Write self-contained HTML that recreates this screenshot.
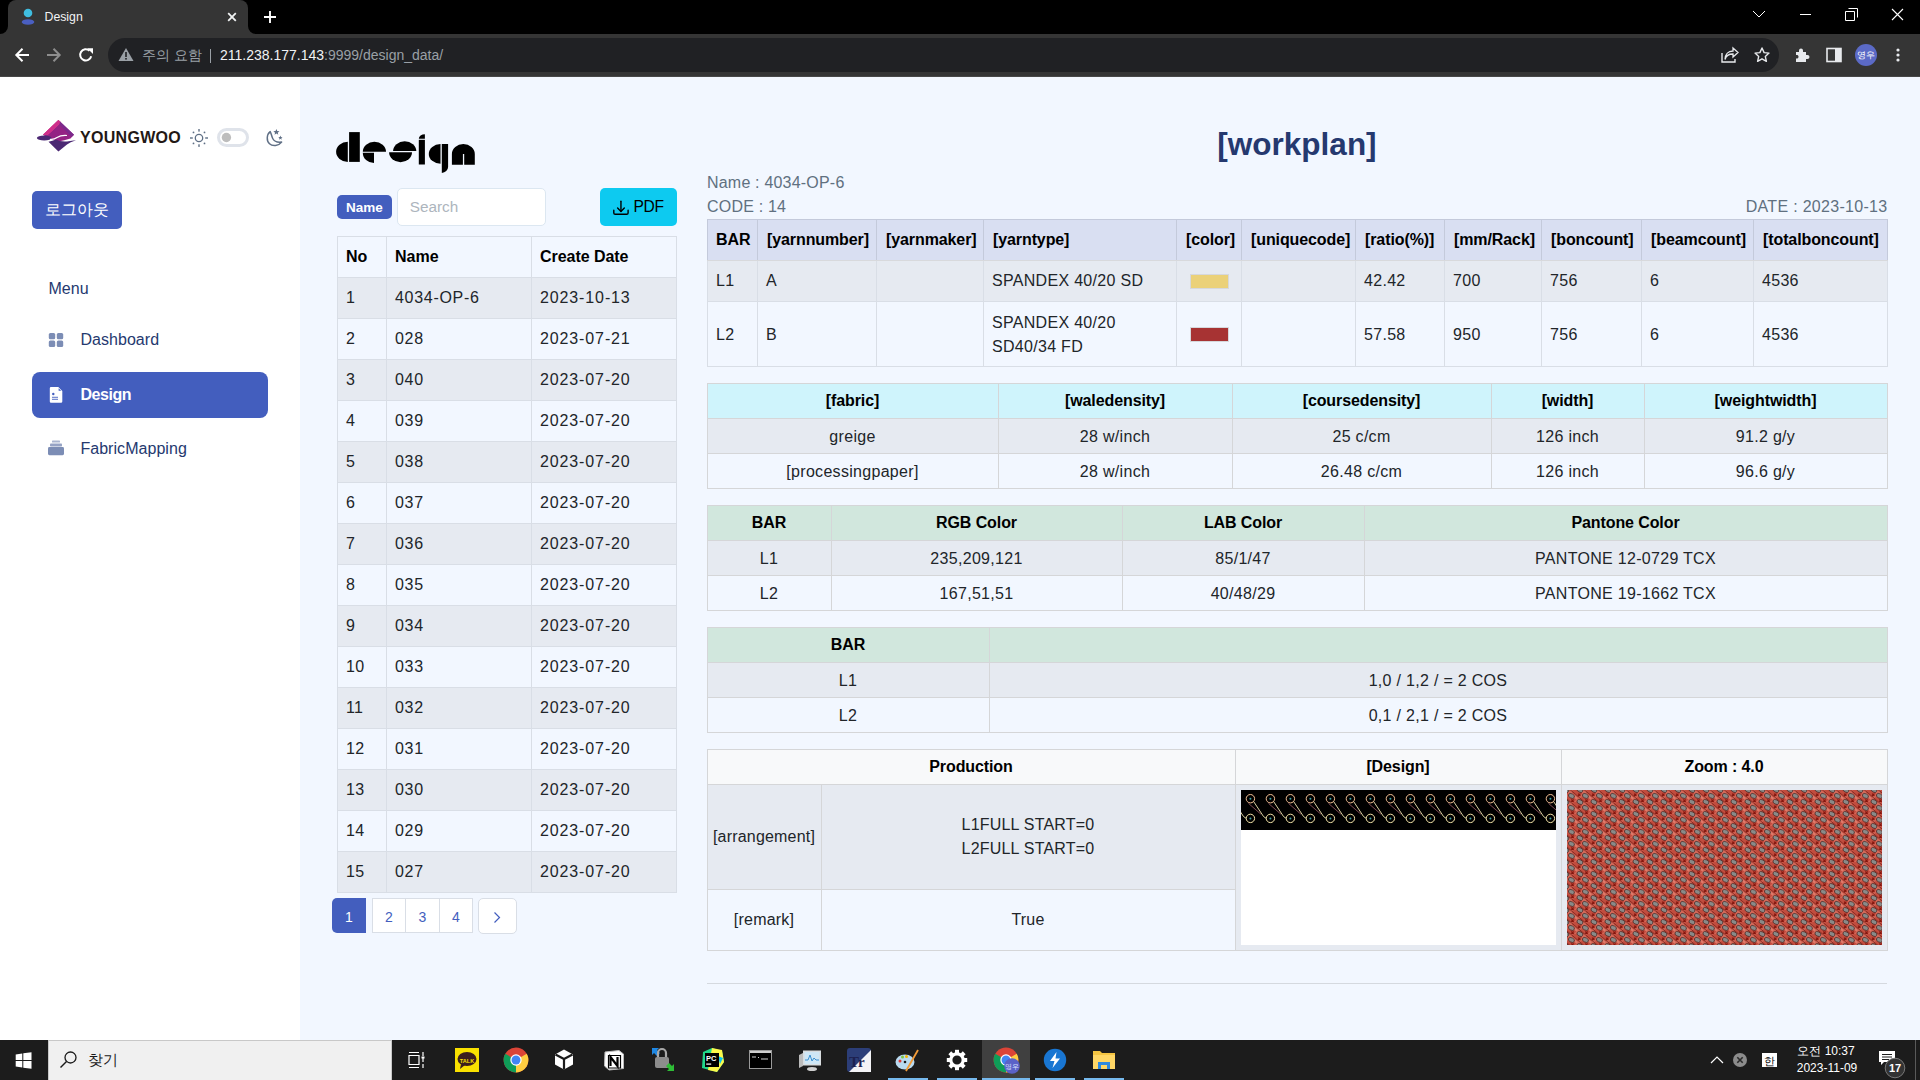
<!DOCTYPE html>
<html><head><meta charset="utf-8">
<style>
*{box-sizing:border-box;margin:0;padding:0}
html,body{width:1920px;height:1080px;overflow:hidden;position:relative;background:#f2f7ff;font-family:"Liberation Sans",sans-serif}
.a{position:absolute}
.t{white-space:nowrap}
svg.a{overflow:visible}
</style></head><body>
<div class="a" style="left:0px;top:0px;width:1920px;height:77px;background:#353535;"></div>
<div class="a" style="left:0px;top:0px;width:1920px;height:34px;background:#000;"></div>
<div class="a" style="left:8px;top:0px;width:240px;height:34px;background:#353535;border-radius:8px 8px 0 0"></div>
<div class="a" style="left:0px;top:26px;width:8px;height:8px;background:#353535;"></div>
<div class="a" style="left:0px;top:0px;width:8px;height:34px;background:#000;border-bottom-right-radius:8px"></div>
<div class="a" style="left:248px;top:26px;width:8px;height:8px;background:#353535;"></div>
<div class="a" style="left:248px;top:0px;width:1672px;height:34px;background:#000;border-bottom-left-radius:8px"></div>
<div class="a" style="left:0px;top:76px;width:1920px;height:1px;background:#474747;"></div>
<svg class="a" style="left:20px;top:7px" width="16" height="18" viewBox="0 0 16 18"><circle cx="8" cy="6" r="4.3" fill="#3fbde0"/><ellipse cx="8" cy="15" rx="6.3" ry="2.8" fill="#4a5fc1"/></svg>
<div class="a t" style="left:44.5px;top:9.24px;font-size:12.3px;line-height:17px;color:#f1f3f4;font-weight:400;">Design</div>
<svg class="a" style="left:226px;top:11px" width="12" height="12" viewBox="0 0 12 12"><path d="M2.2 2.2L9.8 9.8M9.8 2.2L2.2 9.8" stroke="#f1f3f4" stroke-width="1.8"/></svg>
<svg class="a" style="left:262px;top:9px" width="16" height="16" viewBox="0 0 16 16"><path d="M8 2V14M2 8H14" stroke="#fff" stroke-width="1.9"/></svg>
<svg class="a" style="left:1752px;top:9px" width="14" height="10" viewBox="0 0 14 10"><path d="M1 2L7 8L13 2" stroke="#fff" stroke-width="1" fill="none"/></svg>
<div class="a" style="left:1800px;top:14px;width:11px;height:1px;background:#fff;"></div>
<svg class="a" style="left:1845px;top:8px" width="13" height="13" viewBox="0 0 13 13"><path d="M3.5 0.5H12.5V9.5M0.5 3.5H9.5V12.5H0.5Z" stroke="#fff" stroke-width="1" fill="none"/></svg>
<svg class="a" style="left:1891px;top:8px" width="13" height="13" viewBox="0 0 13 13"><path d="M1 1L12 12M12 1L1 12" stroke="#fff" stroke-width="1.1"/></svg>
<svg class="a" style="left:14px;top:47px" width="16" height="16" viewBox="0 0 16 16"><path d="M15 8H2.5M8.5 1.8L2.3 8L8.5 14.2" stroke="#fff" stroke-width="2" fill="none"/></svg>
<svg class="a" style="left:46px;top:47px" width="16" height="16" viewBox="0 0 16 16"><path d="M1 8H13.5M7.5 1.8L13.7 8L7.5 14.2" stroke="#8e8e8e" stroke-width="2" fill="none"/></svg>
<svg class="a" style="left:78px;top:47px" width="16" height="16" viewBox="0 0 16 16"><path d="M13.2 9.2A5.6 5.6 0 1 1 11.5 3.7" stroke="#fff" stroke-width="2" fill="none"/><path d="M9.2 1.3H15V7.1Z" fill="#fff"/></svg>
<div class="a" style="left:108px;top:38px;width:1671px;height:34px;background:#202124;border-radius:17px"></div>
<svg class="a" style="left:118px;top:47px" width="16" height="15" viewBox="0 0 16 15"><path d="M8 1L15.5 14H0.5Z" fill="#9aa0a6"/><rect x="7.2" y="5" width="1.6" height="5" fill="#202124"/><rect x="7.2" y="11" width="1.6" height="1.6" fill="#202124"/></svg>
<div class="a t" style="left:142px;top:45.15px;font-size:14px;line-height:20px;color:#9aa0a6;font-weight:400;">주의 요함</div>
<div class="a" style="left:210px;top:49px;width:1px;height:14px;background:#9aa0a6;"></div>
<div class="a t" style="left:220px;top:45.15px;font-size:14px;line-height:20px;color:#f1f3f4;font-weight:400;">211.238.177.143<span style="color:#9aa0a6">:9999/design_data/</span></div>
<svg class="a" style="left:1721px;top:47px" width="18" height="16" viewBox="0 0 18 16"><path d="M1 6V15H14V12" stroke="#e8eaed" stroke-width="1.4" fill="none"/><path d="M4 11C5 7 8 5.5 12 5.5V8.5L17 4L12 -0.5V2.5C7 2.5 4 6 4 11Z" stroke="#e8eaed" stroke-width="1.3" fill="none" transform="translate(0,1.5)"/></svg>
<svg class="a" style="left:1754px;top:47px" width="16" height="16" viewBox="0 0 16 16"><path d="M8 1L10.1 5.6L15 6.1L11.3 9.4L12.4 14.3L8 11.8L3.6 14.3L4.7 9.4L1 6.1L5.9 5.6Z" stroke="#e8eaed" stroke-width="1.4" fill="none" stroke-linejoin="round"/></svg>
<svg class="a" style="left:1794px;top:47px" width="16" height="16" viewBox="0 0 16 16"><path d="M2 5H5V3.5A2 2 0 0 1 9 3.5V5H12V8H13.5A2 2 0 0 1 13.5 12H12V15H2V11.5H3.5A2 2 0 0 0 3.5 8H2Z" fill="#e8eaed"/></svg>
<svg class="a" style="left:1826px;top:47px" width="16" height="16" viewBox="0 0 16 16"><rect x="1" y="1.5" width="14" height="13" stroke="#e8eaed" stroke-width="1.6" fill="none"/><rect x="9" y="1.5" width="6" height="13" fill="#e8eaed"/></svg>
<svg class="a" style="left:1855px;top:44px" width="22" height="22" viewBox="0 0 22 22"><circle cx="11" cy="11" r="11" fill="#5b6ac6"/></svg>
<div class="a t" style="left:1366px;width:1000px;text-align:center;top:49.38px;font-size:9px;line-height:13px;color:#fff;font-weight:400;">영우</div>
<svg class="a" style="left:1896px;top:47px" width="4" height="16" viewBox="0 0 4 16"><circle cx="2" cy="3" r="1.6" fill="#e8eaed"/><circle cx="2" cy="8" r="1.6" fill="#e8eaed"/><circle cx="2" cy="13" r="1.6" fill="#e8eaed"/></svg>
<div class="a" style="left:0px;top:77px;width:300px;height:963px;background:#fff;"></div>
<svg class="a" style="left:30px;top:112px" width="60" height="48" viewBox="0 0 60 48">
<path d="M28.4 8L44 22.7L40.5 26.5Q34 28.5 28.5 29.5Q23 28 18 26L13 22.7Z" fill="#942284"/>
<path d="M28.4 8L13 22.7L18 22.7L31 10.5Z" fill="#e2408f"/>
<path d="M28.4 8L31 10.5L21 20L17 22.7L13 22.7Z" fill="#cf2e8a"/>
<path d="M30 9.5L44 22.7L41.5 25L29.5 12.5Z" fill="#7b2a8c"/>
<ellipse cx="14.2" cy="26" rx="7.3" ry="2.4" fill="#4b2873"/>
<path d="M18.5 29.8Q24 28.5 26 27.5Q30 30 37 29.5Q42 28.5 46 28.3Q40 30 37 32.5L28.4 39.6Z" fill="#4b2873"/>
<path d="M20 27.3Q24 27.8 27 25.5Q31 23 37 23.5" stroke="#fff" stroke-width="1.2" fill="none"/>
</svg>
<div class="a t" style="left:80px;top:127.26px;font-size:16px;line-height:22px;color:#231815;font-weight:700;letter-spacing:0.3px;">YOUNGWOO</div>
<svg class="a" style="left:188px;top:127px" width="22" height="22" viewBox="0 0 22 22">
<circle cx="11" cy="11" r="3.7" stroke="#5f6f85" stroke-width="1.3" fill="none"/>
<rect x="10.3" y="2" width="1.4" height="2.6" fill="#5f6f85"/><rect x="10.3" y="17.3" width="1.4" height="2.6" fill="#5f6f85"/>
<rect x="2" y="10.3" width="2.8" height="1.4" fill="#5f6f85"/><rect x="17.2" y="10.3" width="2.8" height="1.4" fill="#5f6f85"/>
<circle cx="5.5" cy="5.4" r="0.9" fill="#5f6f85"/><circle cx="16.5" cy="5.4" r="0.9" fill="#5f6f85"/>
<circle cx="5.5" cy="16.4" r="0.9" fill="#5f6f85"/><circle cx="16.5" cy="16.4" r="0.9" fill="#5f6f85"/>
</svg>
<div class="a" style="left:217px;top:128px;width:32px;height:19px;background:#fff;border:3px solid #dfe3ea;border-radius:10px"></div>
<svg class="a" style="left:221px;top:132px" width="11" height="11" viewBox="0 0 11 11"><circle cx="5.4" cy="5.5" r="4.7" fill="#bdbdbd"/></svg>
<svg class="a" style="left:264px;top:128px" width="22" height="20" viewBox="0 0 22 20">
<path d="M6.2 3.6C2.5 6.5 2.3 13 5.5 15.8C8.5 18.6 14.5 18.2 17.6 14.1C13.5 14.6 10.2 13.5 8.7 10.5C7.6 8.3 7.3 5.6 6.2 3.6Z" stroke="#5f6f85" stroke-width="1.5" fill="none" stroke-linejoin="round"/>
<path d="M12.40 1.00L13.22 3.07L15.44 3.21L13.73 4.63L14.28 6.79L12.40 5.60L10.52 6.79L11.07 4.63L9.36 3.21L11.58 3.07Z" fill="#5f6f85"/>
<path d="M16.40 7.50L16.99 8.99L18.59 9.09L17.35 10.11L17.75 11.66L16.40 10.80L15.05 11.66L15.45 10.11L14.21 9.09L15.81 8.99Z" fill="#5f6f85"/>
</svg>
<div class="a" style="left:32px;top:191px;width:90px;height:38px;background:#435ebe;border-radius:5px"></div>
<div class="a t" style="left:-423px;width:1000px;text-align:center;top:199.46px;font-size:16px;line-height:22px;color:#fff;font-weight:400;">로그아웃</div>
<div class="a t" style="left:48.4px;top:278.36px;font-size:16px;line-height:22px;color:#25396f;font-weight:400;letter-spacing:0.1px;">Menu</div>
<svg class="a" style="left:48px;top:332px" width="16" height="16" viewBox="0 0 16 16">
<rect x="0.8" y="0.9" width="6.4" height="6.4" rx="1.5" fill="#7c8db5"/><rect x="8.8" y="0.9" width="6.4" height="6.4" rx="1.5" fill="#7c8db5"/>
<rect x="0.8" y="8.6" width="6.4" height="6.4" rx="1.5" fill="#7c8db5"/><rect x="8.8" y="8.6" width="6.4" height="6.4" rx="1.5" fill="#7c8db5"/>
</svg>
<div class="a t" style="left:80.4px;top:329.06px;font-size:16px;line-height:22px;color:#25396f;font-weight:400;letter-spacing:0.05px;">Dashboard</div>
<div class="a" style="left:32px;top:372px;width:236px;height:46px;background:#435ebe;border-radius:8px"></div>
<svg class="a" style="left:49px;top:386px" width="15" height="18" viewBox="0 0 15 18">
<path d="M2 1H9.3L13.3 5V15.5A1.3 1.3 0 0 1 12 16.8H2A1.3 1.3 0 0 1 0.8 15.5V2.3A1.3 1.3 0 0 1 2 1Z" fill="#fff"/>
<path d="M9.6 2.2L12.2 4.8H9.6Z" fill="#435ebe"/>
<circle cx="4.3" cy="8" r="1.2" fill="#435ebe"/>
<rect x="3" y="10.8" width="6" height="0.9" fill="#435ebe"/><rect x="3" y="12.8" width="6" height="0.9" fill="#435ebe"/>
</svg>
<div class="a t" style="left:80.4px;top:383.96px;font-size:16px;line-height:22px;color:#fff;font-weight:700;letter-spacing:-0.45px;">Design</div>
<svg class="a" style="left:47px;top:440px" width="18" height="16" viewBox="0 0 18 16">
<rect x="5" y="0.6" width="8" height="2" rx="0.6" fill="#aab5d0"/>
<rect x="3" y="3.6" width="12" height="3" rx="0.8" fill="#96a3c5"/>
<rect x="1" y="7" width="16" height="8.2" rx="1.4" fill="#7c8db5"/>
</svg>
<div class="a t" style="left:80.4px;top:437.96px;font-size:16px;line-height:22px;color:#25396f;font-weight:400;letter-spacing:0.05px;">FabricMapping</div>
<div class="a" style="left:300px;top:77px;width:1620px;height:963px;background:#f2f7ff;"></div>
<svg class="a" style="left:330px;top:125px" width="150" height="55" viewBox="0 0 150 55">
<path d="M17.8 16.8A11.7 10.05 0 0 0 17.8 36.9Z" fill="#000"/>
<rect x="19.1" y="7.1" width="10.7" height="29.8" fill="#000"/>
<path d="M32.8 26.7A11.6 9.9 0 0 1 56 26.7Z" fill="#000"/>
<path d="M44 27.7H32.8A11.2 10.2 0 0 0 44 37.9Z" fill="#000"/>
<path d="M63.1 26A11.6 9.7 0 0 1 86.3 26Z" fill="#000"/>
<path d="M59.1 27.2H82A11.45 10 0 0 1 59.1 27.2Z" fill="#000"/>
<path d="M94.9 13.7H88.8A6.1 4.5 0 0 1 94.9 9.2Z" fill="#000"/>
<rect x="88.8" y="14.8" width="6.1" height="24.7" fill="#000"/>
<path d="M110.5 19.1A11.7 9.8 0 0 0 110.5 38.7Z" fill="#000"/>
<path d="M111.8 19.1H118.1V41.8A6.3 6.1 0 0 1 111.8 47.9Z" fill="#000"/>
<path d="M121.9 29A11.45 9.9 0 0 1 144.8 29V39.7H134.2V29H132.9V39.7H121.9Z" fill="#000"/>
</svg>
<div class="a" style="left:337px;top:195px;width:55px;height:24px;background:#435ebe;border-radius:5px"></div>
<div class="a t" style="left:-135.5px;width:1000px;text-align:center;top:197.82px;font-size:13.5px;line-height:19px;color:#fff;font-weight:700;">Name</div>
<div class="a" style="left:397px;top:188px;width:149px;height:38px;background:#fff;border:1px solid #dce7f1;border-radius:5px"></div>
<div class="a t" style="left:409.7px;top:195.80px;font-size:15.3px;line-height:21px;color:#adb5bd;font-weight:400;">Search</div>
<div class="a" style="left:600px;top:188px;width:77px;height:38px;background:#0dcaf0;border-radius:5px"></div>
<svg class="a" style="left:610px;top:199px" width="22" height="18" viewBox="0 0 22 18"><path d="M3.8 11.2V13.9Q3.8 15.3 5.2 15.3H16.7Q18.1 15.3 18.1 13.9V11.2" stroke="#000" stroke-width="1.4" fill="none" stroke-linecap="round"/><path d="M10.95 2.2V12.2" stroke="#000" stroke-width="1.4" stroke-linecap="round"/><path d="M7.6 9.1L10.95 12.5L14.3 9.1" stroke="#000" stroke-width="1.4" fill="none" stroke-linecap="round" stroke-linejoin="round"/></svg>
<div class="a t" style="left:633.5px;top:196.49px;font-size:15.6px;line-height:22px;color:#000;font-weight:400;letter-spacing:-0.3px;">PDF</div>
<div class="a" style="left:337px;top:277px;width:339px;height:41px;background:#e6eaf1;"></div>
<div class="a" style="left:337px;top:359px;width:339px;height:41px;background:#e6eaf1;"></div>
<div class="a" style="left:337px;top:441px;width:339px;height:41px;background:#e6eaf1;"></div>
<div class="a" style="left:337px;top:523px;width:339px;height:41px;background:#e6eaf1;"></div>
<div class="a" style="left:337px;top:605px;width:339px;height:41px;background:#e6eaf1;"></div>
<div class="a" style="left:337px;top:687px;width:339px;height:41px;background:#e6eaf1;"></div>
<div class="a" style="left:337px;top:769px;width:339px;height:41px;background:#e6eaf1;"></div>
<div class="a" style="left:337px;top:851px;width:339px;height:41px;background:#e6eaf1;"></div>
<div class="a" style="left:337px;top:236px;width:340px;height:1px;background:#d9dee6;"></div>
<div class="a" style="left:337px;top:277px;width:340px;height:1px;background:#d9dee6;"></div>
<div class="a" style="left:337px;top:318px;width:340px;height:1px;background:#d9dee6;"></div>
<div class="a" style="left:337px;top:359px;width:340px;height:1px;background:#d9dee6;"></div>
<div class="a" style="left:337px;top:400px;width:340px;height:1px;background:#d9dee6;"></div>
<div class="a" style="left:337px;top:441px;width:340px;height:1px;background:#d9dee6;"></div>
<div class="a" style="left:337px;top:482px;width:340px;height:1px;background:#d9dee6;"></div>
<div class="a" style="left:337px;top:523px;width:340px;height:1px;background:#d9dee6;"></div>
<div class="a" style="left:337px;top:564px;width:340px;height:1px;background:#d9dee6;"></div>
<div class="a" style="left:337px;top:605px;width:340px;height:1px;background:#d9dee6;"></div>
<div class="a" style="left:337px;top:646px;width:340px;height:1px;background:#d9dee6;"></div>
<div class="a" style="left:337px;top:687px;width:340px;height:1px;background:#d9dee6;"></div>
<div class="a" style="left:337px;top:728px;width:340px;height:1px;background:#d9dee6;"></div>
<div class="a" style="left:337px;top:769px;width:340px;height:1px;background:#d9dee6;"></div>
<div class="a" style="left:337px;top:810px;width:340px;height:1px;background:#d9dee6;"></div>
<div class="a" style="left:337px;top:851px;width:340px;height:1px;background:#d9dee6;"></div>
<div class="a" style="left:337px;top:892px;width:340px;height:1px;background:#d9dee6;"></div>
<div class="a" style="left:337px;top:236px;width:1px;height:657px;background:#d9dee6;"></div>
<div class="a" style="left:386px;top:236px;width:1px;height:657px;background:#d9dee6;"></div>
<div class="a" style="left:531px;top:236px;width:1px;height:657px;background:#d9dee6;"></div>
<div class="a" style="left:676px;top:236px;width:1px;height:657px;background:#d9dee6;"></div>
<div class="a t" style="left:346px;top:246.06px;font-size:16px;line-height:22px;color:#000;font-weight:700;">No</div>
<div class="a t" style="left:395px;top:246.06px;font-size:16px;line-height:22px;color:#000;font-weight:700;">Name</div>
<div class="a t" style="left:540px;top:246.06px;font-size:16px;line-height:22px;color:#000;font-weight:700;letter-spacing:-0.05px;">Create Date</div>
<div class="a t" style="left:346px;top:287.06px;font-size:16px;line-height:22px;color:#212529;font-weight:400;letter-spacing:0.3px;">1</div>
<div class="a t" style="left:395px;top:287.06px;font-size:16px;line-height:22px;color:#212529;font-weight:400;letter-spacing:0.7px;">4034-OP-6</div>
<div class="a t" style="left:540px;top:287.06px;font-size:16px;line-height:22px;color:#212529;font-weight:400;letter-spacing:0.88px;">2023-10-13</div>
<div class="a t" style="left:346px;top:328.06px;font-size:16px;line-height:22px;color:#212529;font-weight:400;letter-spacing:0.3px;">2</div>
<div class="a t" style="left:395px;top:328.06px;font-size:16px;line-height:22px;color:#212529;font-weight:400;letter-spacing:0.7px;">028</div>
<div class="a t" style="left:540px;top:328.06px;font-size:16px;line-height:22px;color:#212529;font-weight:400;letter-spacing:0.88px;">2023-07-21</div>
<div class="a t" style="left:346px;top:369.06px;font-size:16px;line-height:22px;color:#212529;font-weight:400;letter-spacing:0.3px;">3</div>
<div class="a t" style="left:395px;top:369.06px;font-size:16px;line-height:22px;color:#212529;font-weight:400;letter-spacing:0.7px;">040</div>
<div class="a t" style="left:540px;top:369.06px;font-size:16px;line-height:22px;color:#212529;font-weight:400;letter-spacing:0.88px;">2023-07-20</div>
<div class="a t" style="left:346px;top:410.06px;font-size:16px;line-height:22px;color:#212529;font-weight:400;letter-spacing:0.3px;">4</div>
<div class="a t" style="left:395px;top:410.06px;font-size:16px;line-height:22px;color:#212529;font-weight:400;letter-spacing:0.7px;">039</div>
<div class="a t" style="left:540px;top:410.06px;font-size:16px;line-height:22px;color:#212529;font-weight:400;letter-spacing:0.88px;">2023-07-20</div>
<div class="a t" style="left:346px;top:451.06px;font-size:16px;line-height:22px;color:#212529;font-weight:400;letter-spacing:0.3px;">5</div>
<div class="a t" style="left:395px;top:451.06px;font-size:16px;line-height:22px;color:#212529;font-weight:400;letter-spacing:0.7px;">038</div>
<div class="a t" style="left:540px;top:451.06px;font-size:16px;line-height:22px;color:#212529;font-weight:400;letter-spacing:0.88px;">2023-07-20</div>
<div class="a t" style="left:346px;top:492.06px;font-size:16px;line-height:22px;color:#212529;font-weight:400;letter-spacing:0.3px;">6</div>
<div class="a t" style="left:395px;top:492.06px;font-size:16px;line-height:22px;color:#212529;font-weight:400;letter-spacing:0.7px;">037</div>
<div class="a t" style="left:540px;top:492.06px;font-size:16px;line-height:22px;color:#212529;font-weight:400;letter-spacing:0.88px;">2023-07-20</div>
<div class="a t" style="left:346px;top:533.06px;font-size:16px;line-height:22px;color:#212529;font-weight:400;letter-spacing:0.3px;">7</div>
<div class="a t" style="left:395px;top:533.06px;font-size:16px;line-height:22px;color:#212529;font-weight:400;letter-spacing:0.7px;">036</div>
<div class="a t" style="left:540px;top:533.06px;font-size:16px;line-height:22px;color:#212529;font-weight:400;letter-spacing:0.88px;">2023-07-20</div>
<div class="a t" style="left:346px;top:574.06px;font-size:16px;line-height:22px;color:#212529;font-weight:400;letter-spacing:0.3px;">8</div>
<div class="a t" style="left:395px;top:574.06px;font-size:16px;line-height:22px;color:#212529;font-weight:400;letter-spacing:0.7px;">035</div>
<div class="a t" style="left:540px;top:574.06px;font-size:16px;line-height:22px;color:#212529;font-weight:400;letter-spacing:0.88px;">2023-07-20</div>
<div class="a t" style="left:346px;top:615.06px;font-size:16px;line-height:22px;color:#212529;font-weight:400;letter-spacing:0.3px;">9</div>
<div class="a t" style="left:395px;top:615.06px;font-size:16px;line-height:22px;color:#212529;font-weight:400;letter-spacing:0.7px;">034</div>
<div class="a t" style="left:540px;top:615.06px;font-size:16px;line-height:22px;color:#212529;font-weight:400;letter-spacing:0.88px;">2023-07-20</div>
<div class="a t" style="left:346px;top:656.06px;font-size:16px;line-height:22px;color:#212529;font-weight:400;letter-spacing:0.3px;">10</div>
<div class="a t" style="left:395px;top:656.06px;font-size:16px;line-height:22px;color:#212529;font-weight:400;letter-spacing:0.7px;">033</div>
<div class="a t" style="left:540px;top:656.06px;font-size:16px;line-height:22px;color:#212529;font-weight:400;letter-spacing:0.88px;">2023-07-20</div>
<div class="a t" style="left:346px;top:697.06px;font-size:16px;line-height:22px;color:#212529;font-weight:400;letter-spacing:0.3px;">11</div>
<div class="a t" style="left:395px;top:697.06px;font-size:16px;line-height:22px;color:#212529;font-weight:400;letter-spacing:0.7px;">032</div>
<div class="a t" style="left:540px;top:697.06px;font-size:16px;line-height:22px;color:#212529;font-weight:400;letter-spacing:0.88px;">2023-07-20</div>
<div class="a t" style="left:346px;top:738.06px;font-size:16px;line-height:22px;color:#212529;font-weight:400;letter-spacing:0.3px;">12</div>
<div class="a t" style="left:395px;top:738.06px;font-size:16px;line-height:22px;color:#212529;font-weight:400;letter-spacing:0.7px;">031</div>
<div class="a t" style="left:540px;top:738.06px;font-size:16px;line-height:22px;color:#212529;font-weight:400;letter-spacing:0.88px;">2023-07-20</div>
<div class="a t" style="left:346px;top:779.06px;font-size:16px;line-height:22px;color:#212529;font-weight:400;letter-spacing:0.3px;">13</div>
<div class="a t" style="left:395px;top:779.06px;font-size:16px;line-height:22px;color:#212529;font-weight:400;letter-spacing:0.7px;">030</div>
<div class="a t" style="left:540px;top:779.06px;font-size:16px;line-height:22px;color:#212529;font-weight:400;letter-spacing:0.88px;">2023-07-20</div>
<div class="a t" style="left:346px;top:820.06px;font-size:16px;line-height:22px;color:#212529;font-weight:400;letter-spacing:0.3px;">14</div>
<div class="a t" style="left:395px;top:820.06px;font-size:16px;line-height:22px;color:#212529;font-weight:400;letter-spacing:0.7px;">029</div>
<div class="a t" style="left:540px;top:820.06px;font-size:16px;line-height:22px;color:#212529;font-weight:400;letter-spacing:0.88px;">2023-07-20</div>
<div class="a t" style="left:346px;top:861.06px;font-size:16px;line-height:22px;color:#212529;font-weight:400;letter-spacing:0.3px;">15</div>
<div class="a t" style="left:395px;top:861.06px;font-size:16px;line-height:22px;color:#212529;font-weight:400;letter-spacing:0.7px;">027</div>
<div class="a t" style="left:540px;top:861.06px;font-size:16px;line-height:22px;color:#212529;font-weight:400;letter-spacing:0.88px;">2023-07-20</div>
<div class="a" style="left:332px;top:898px;width:34px;height:35px;background:#435ebe;border-radius:5px 0 0 5px"></div>
<div class="a t" style="left:-151px;width:1000px;text-align:center;top:906.55px;font-size:14px;line-height:20px;color:#fff;font-weight:400;">1</div>
<div class="a" style="left:372px;top:898px;width:101px;height:35px;background:#fff;border:1px solid #d9dee6"></div>
<div class="a" style="left:405px;top:898px;width:1px;height:35px;background:#d9dee6;"></div>
<div class="a" style="left:439px;top:898px;width:1px;height:35px;background:#d9dee6;"></div>
<div class="a t" style="left:-111px;width:1000px;text-align:center;top:906.55px;font-size:14px;line-height:20px;color:#435ebe;font-weight:400;">2</div>
<div class="a t" style="left:-77.5px;width:1000px;text-align:center;top:906.55px;font-size:14px;line-height:20px;color:#435ebe;font-weight:400;">3</div>
<div class="a t" style="left:-44px;width:1000px;text-align:center;top:906.55px;font-size:14px;line-height:20px;color:#435ebe;font-weight:400;">4</div>
<div class="a" style="left:478px;top:898px;width:39px;height:36px;background:#fff;border:1px solid #d9dee6;border-radius:5px"></div>
<svg class="a" style="left:492px;top:911px" width="10" height="13" viewBox="0 0 10 13"><path d="M2.5 1.5L7.5 6.5L2.5 11.5" stroke="#435ebe" stroke-width="1.2" fill="none"/></svg>
<div class="a t" style="left:797px;width:1000px;text-align:center;top:122.19px;font-size:31.5px;line-height:44px;color:#25396f;font-weight:700;">[workplan]</div>
<div class="a t" style="left:707px;top:172.26px;font-size:16px;line-height:22px;color:#607080;font-weight:400;letter-spacing:0.2px;">Name : 4034-OP-6</div>
<div class="a t" style="left:707px;top:196.26px;font-size:16px;line-height:22px;color:#607080;font-weight:400;letter-spacing:0.2px;">CODE : 14</div>
<div class="a t" style="left:887.5px;width:1000px;text-align:right;top:196.26px;font-size:16px;line-height:22px;color:#607080;font-weight:400;letter-spacing:0.3px;">DATE : 2023-10-13</div>
<div class="a" style="left:707px;top:219px;width:1180px;height:41px;background:#d9dff2;"></div>
<div class="a" style="left:707px;top:260px;width:1180px;height:41px;background:#e6eaf1;"></div>
<div class="a" style="left:707px;top:219px;width:1181px;height:1px;background:#d9dee6;"></div>
<div class="a" style="left:707px;top:260px;width:1181px;height:1px;background:#d9dee6;"></div>
<div class="a" style="left:707px;top:301px;width:1181px;height:1px;background:#d9dee6;"></div>
<div class="a" style="left:707px;top:366px;width:1181px;height:1px;background:#d9dee6;"></div>
<div class="a" style="left:707px;top:219px;width:1px;height:148px;background:#d9dee6;"></div>
<div class="a" style="left:757px;top:219px;width:1px;height:148px;background:#d9dee6;"></div>
<div class="a" style="left:876px;top:219px;width:1px;height:148px;background:#d9dee6;"></div>
<div class="a" style="left:983px;top:219px;width:1px;height:148px;background:#d9dee6;"></div>
<div class="a" style="left:1176px;top:219px;width:1px;height:148px;background:#d9dee6;"></div>
<div class="a" style="left:1241px;top:219px;width:1px;height:148px;background:#d9dee6;"></div>
<div class="a" style="left:1355px;top:219px;width:1px;height:148px;background:#d9dee6;"></div>
<div class="a" style="left:1444px;top:219px;width:1px;height:148px;background:#d9dee6;"></div>
<div class="a" style="left:1541px;top:219px;width:1px;height:148px;background:#d9dee6;"></div>
<div class="a" style="left:1641px;top:219px;width:1px;height:148px;background:#d9dee6;"></div>
<div class="a" style="left:1753px;top:219px;width:1px;height:148px;background:#d9dee6;"></div>
<div class="a" style="left:1887px;top:219px;width:1px;height:148px;background:#d9dee6;"></div>
<div class="a" style="left:707px;top:219px;width:1181px;height:1px;background:#c4cadb;"></div>
<div class="a" style="left:707px;top:219px;width:1px;height:41px;background:#c4cadb;"></div>
<div class="a" style="left:757px;top:219px;width:1px;height:41px;background:#c4cadb;"></div>
<div class="a" style="left:876px;top:219px;width:1px;height:41px;background:#c4cadb;"></div>
<div class="a" style="left:983px;top:219px;width:1px;height:41px;background:#c4cadb;"></div>
<div class="a" style="left:1176px;top:219px;width:1px;height:41px;background:#c4cadb;"></div>
<div class="a" style="left:1241px;top:219px;width:1px;height:41px;background:#c4cadb;"></div>
<div class="a" style="left:1355px;top:219px;width:1px;height:41px;background:#c4cadb;"></div>
<div class="a" style="left:1444px;top:219px;width:1px;height:41px;background:#c4cadb;"></div>
<div class="a" style="left:1541px;top:219px;width:1px;height:41px;background:#c4cadb;"></div>
<div class="a" style="left:1641px;top:219px;width:1px;height:41px;background:#c4cadb;"></div>
<div class="a" style="left:1753px;top:219px;width:1px;height:41px;background:#c4cadb;"></div>
<div class="a" style="left:1887px;top:219px;width:1px;height:41px;background:#c4cadb;"></div>
<div class="a" style="left:707px;top:260px;width:1181px;height:1px;background:#d8d9dc;"></div>
<div class="a t" style="left:716px;top:229.06px;font-size:16px;line-height:22px;color:#000;font-weight:700;letter-spacing:-0.1px;">BAR</div>
<div class="a t" style="left:767px;top:229.06px;font-size:16px;line-height:22px;color:#000;font-weight:700;letter-spacing:-0.1px;">[yarnnumber]</div>
<div class="a t" style="left:886px;top:229.06px;font-size:16px;line-height:22px;color:#000;font-weight:700;letter-spacing:-0.1px;">[yarnmaker]</div>
<div class="a t" style="left:993px;top:229.06px;font-size:16px;line-height:22px;color:#000;font-weight:700;letter-spacing:-0.1px;">[yarntype]</div>
<div class="a t" style="left:1186px;top:229.06px;font-size:16px;line-height:22px;color:#000;font-weight:700;letter-spacing:-0.1px;">[color]</div>
<div class="a t" style="left:1251px;top:229.06px;font-size:16px;line-height:22px;color:#000;font-weight:700;letter-spacing:-0.1px;">[uniquecode]</div>
<div class="a t" style="left:1365px;top:229.06px;font-size:16px;line-height:22px;color:#000;font-weight:700;letter-spacing:-0.1px;">[ratio(%)]</div>
<div class="a t" style="left:1454px;top:229.06px;font-size:16px;line-height:22px;color:#000;font-weight:700;letter-spacing:-0.1px;">[mm/Rack]</div>
<div class="a t" style="left:1551px;top:229.06px;font-size:16px;line-height:22px;color:#000;font-weight:700;letter-spacing:-0.1px;">[boncount]</div>
<div class="a t" style="left:1651px;top:229.06px;font-size:16px;line-height:22px;color:#000;font-weight:700;letter-spacing:-0.1px;">[beamcount]</div>
<div class="a t" style="left:1763px;top:229.06px;font-size:16px;line-height:22px;color:#000;font-weight:700;letter-spacing:-0.1px;">[totalboncount]</div>
<div class="a t" style="left:716px;top:270.06px;font-size:16px;line-height:22px;color:#212529;font-weight:400;letter-spacing:0.3px;">L1</div>
<div class="a t" style="left:766px;top:270.06px;font-size:16px;line-height:22px;color:#212529;font-weight:400;letter-spacing:0.3px;">A</div>
<div class="a t" style="left:992px;top:270.06px;font-size:16px;line-height:22px;color:#212529;font-weight:400;letter-spacing:0.3px;">SPANDEX 40/20 SD</div>
<div class="a t" style="left:1364px;top:270.06px;font-size:16px;line-height:22px;color:#212529;font-weight:400;letter-spacing:0.3px;">42.42</div>
<div class="a t" style="left:1453px;top:270.06px;font-size:16px;line-height:22px;color:#212529;font-weight:400;letter-spacing:0.3px;">700</div>
<div class="a t" style="left:1550px;top:270.06px;font-size:16px;line-height:22px;color:#212529;font-weight:400;letter-spacing:0.3px;">756</div>
<div class="a t" style="left:1650px;top:270.06px;font-size:16px;line-height:22px;color:#212529;font-weight:400;letter-spacing:0.3px;">6</div>
<div class="a t" style="left:1762px;top:270.06px;font-size:16px;line-height:22px;color:#212529;font-weight:400;letter-spacing:0.3px;">4536</div>
<div class="a t" style="left:716px;top:323.56px;font-size:16px;line-height:22px;color:#212529;font-weight:400;letter-spacing:0.3px;">L2</div>
<div class="a t" style="left:766px;top:323.56px;font-size:16px;line-height:22px;color:#212529;font-weight:400;letter-spacing:0.3px;">B</div>
<div class="a t" style="left:1364px;top:323.56px;font-size:16px;line-height:22px;color:#212529;font-weight:400;letter-spacing:0.3px;">57.58</div>
<div class="a t" style="left:1453px;top:323.56px;font-size:16px;line-height:22px;color:#212529;font-weight:400;letter-spacing:0.3px;">950</div>
<div class="a t" style="left:1550px;top:323.56px;font-size:16px;line-height:22px;color:#212529;font-weight:400;letter-spacing:0.3px;">756</div>
<div class="a t" style="left:1650px;top:323.56px;font-size:16px;line-height:22px;color:#212529;font-weight:400;letter-spacing:0.3px;">6</div>
<div class="a t" style="left:1762px;top:323.56px;font-size:16px;line-height:22px;color:#212529;font-weight:400;letter-spacing:0.3px;">4536</div>
<div class="a t" style="left:992px;top:311.66px;font-size:16px;line-height:22px;color:#212529;font-weight:400;letter-spacing:0.3px;">SPANDEX 40/20</div>
<div class="a t" style="left:992px;top:335.66px;font-size:16px;line-height:22px;color:#212529;font-weight:400;letter-spacing:0.3px;">SD40/34 FD</div>
<div class="a" style="left:1190px;top:274px;width:39px;height:15px;background:#d6d8dc;"></div>
<div class="a" style="left:1191px;top:275px;width:37px;height:13px;background:rgb(235,209,121);"></div>
<div class="a" style="left:1190px;top:327px;width:39px;height:15px;background:#d6d8dc;"></div>
<div class="a" style="left:1191px;top:328px;width:37px;height:13px;background:rgb(167,51,51);"></div>
<div class="a" style="left:707px;top:383px;width:1180px;height:35px;background:#cff4fc;"></div>
<div class="a" style="left:707px;top:418px;width:1180px;height:35px;background:#e6eaf1;"></div>
<div class="a" style="left:707px;top:383px;width:1181px;height:1px;background:#d5d6d8;"></div>
<div class="a" style="left:707px;top:418px;width:1181px;height:1px;background:#d5d6d8;"></div>
<div class="a" style="left:707px;top:453px;width:1181px;height:1px;background:#d5d6d8;"></div>
<div class="a" style="left:707px;top:488px;width:1181px;height:1px;background:#d5d6d8;"></div>
<div class="a" style="left:707px;top:383px;width:1px;height:106px;background:#d5d6d8;"></div>
<div class="a" style="left:998px;top:383px;width:1px;height:106px;background:#d5d6d8;"></div>
<div class="a" style="left:1232px;top:383px;width:1px;height:106px;background:#d5d6d8;"></div>
<div class="a" style="left:1491px;top:383px;width:1px;height:106px;background:#d5d6d8;"></div>
<div class="a" style="left:1644px;top:383px;width:1px;height:106px;background:#d5d6d8;"></div>
<div class="a" style="left:1887px;top:383px;width:1px;height:106px;background:#d5d6d8;"></div>
<div class="a t" style="left:352.5px;width:1000px;text-align:center;top:390.26px;font-size:16px;line-height:22px;color:#000;font-weight:700;letter-spacing:-0.1px;">[fabric]</div>
<div class="a t" style="left:615.0px;width:1000px;text-align:center;top:390.26px;font-size:16px;line-height:22px;color:#000;font-weight:700;letter-spacing:-0.1px;">[waledensity]</div>
<div class="a t" style="left:861.5px;width:1000px;text-align:center;top:390.26px;font-size:16px;line-height:22px;color:#000;font-weight:700;letter-spacing:-0.1px;">[coursedensity]</div>
<div class="a t" style="left:1067.5px;width:1000px;text-align:center;top:390.26px;font-size:16px;line-height:22px;color:#000;font-weight:700;letter-spacing:-0.1px;">[width]</div>
<div class="a t" style="left:1265.5px;width:1000px;text-align:center;top:390.26px;font-size:16px;line-height:22px;color:#000;font-weight:700;letter-spacing:-0.1px;">[weightwidth]</div>
<div class="a t" style="left:352.5px;width:1000px;text-align:center;top:426.06px;font-size:16px;line-height:22px;color:#212529;font-weight:400;letter-spacing:0.3px;">greige</div>
<div class="a t" style="left:615.0px;width:1000px;text-align:center;top:426.06px;font-size:16px;line-height:22px;color:#212529;font-weight:400;letter-spacing:0.3px;">28 w/inch</div>
<div class="a t" style="left:861.5px;width:1000px;text-align:center;top:426.06px;font-size:16px;line-height:22px;color:#212529;font-weight:400;letter-spacing:0.3px;">25 c/cm</div>
<div class="a t" style="left:1067.5px;width:1000px;text-align:center;top:426.06px;font-size:16px;line-height:22px;color:#212529;font-weight:400;letter-spacing:0.3px;">126 inch</div>
<div class="a t" style="left:1265.5px;width:1000px;text-align:center;top:426.06px;font-size:16px;line-height:22px;color:#212529;font-weight:400;letter-spacing:0.3px;">91.2 g/y</div>
<div class="a t" style="left:352.5px;width:1000px;text-align:center;top:461.06px;font-size:16px;line-height:22px;color:#212529;font-weight:400;letter-spacing:0.3px;">[processingpaper]</div>
<div class="a t" style="left:615.0px;width:1000px;text-align:center;top:461.06px;font-size:16px;line-height:22px;color:#212529;font-weight:400;letter-spacing:0.3px;">28 w/inch</div>
<div class="a t" style="left:861.5px;width:1000px;text-align:center;top:461.06px;font-size:16px;line-height:22px;color:#212529;font-weight:400;letter-spacing:0.3px;">26.48 c/cm</div>
<div class="a t" style="left:1067.5px;width:1000px;text-align:center;top:461.06px;font-size:16px;line-height:22px;color:#212529;font-weight:400;letter-spacing:0.3px;">126 inch</div>
<div class="a t" style="left:1265.5px;width:1000px;text-align:center;top:461.06px;font-size:16px;line-height:22px;color:#212529;font-weight:400;letter-spacing:0.3px;">96.6 g/y</div>
<div class="a" style="left:707px;top:505px;width:1180px;height:35px;background:#d1e7dd;"></div>
<div class="a" style="left:707px;top:540px;width:1180px;height:35px;background:#e6eaf1;"></div>
<div class="a" style="left:707px;top:505px;width:1181px;height:1px;background:#d5d6d8;"></div>
<div class="a" style="left:707px;top:540px;width:1181px;height:1px;background:#d5d6d8;"></div>
<div class="a" style="left:707px;top:575px;width:1181px;height:1px;background:#d5d6d8;"></div>
<div class="a" style="left:707px;top:610px;width:1181px;height:1px;background:#d5d6d8;"></div>
<div class="a" style="left:707px;top:505px;width:1px;height:106px;background:#d5d6d8;"></div>
<div class="a" style="left:831px;top:505px;width:1px;height:106px;background:#d5d6d8;"></div>
<div class="a" style="left:1122px;top:505px;width:1px;height:106px;background:#d5d6d8;"></div>
<div class="a" style="left:1364px;top:505px;width:1px;height:106px;background:#d5d6d8;"></div>
<div class="a" style="left:1887px;top:505px;width:1px;height:106px;background:#d5d6d8;"></div>
<div class="a t" style="left:269.0px;width:1000px;text-align:center;top:512.26px;font-size:16px;line-height:22px;color:#000;font-weight:700;letter-spacing:-0.1px;">BAR</div>
<div class="a t" style="left:476.5px;width:1000px;text-align:center;top:512.26px;font-size:16px;line-height:22px;color:#000;font-weight:700;letter-spacing:-0.1px;">RGB Color</div>
<div class="a t" style="left:743.0px;width:1000px;text-align:center;top:512.26px;font-size:16px;line-height:22px;color:#000;font-weight:700;letter-spacing:-0.1px;">LAB Color</div>
<div class="a t" style="left:1125.5px;width:1000px;text-align:center;top:512.26px;font-size:16px;line-height:22px;color:#000;font-weight:700;letter-spacing:-0.1px;">Pantone Color</div>
<div class="a t" style="left:269.0px;width:1000px;text-align:center;top:548.06px;font-size:16px;line-height:22px;color:#212529;font-weight:400;letter-spacing:0.3px;">L1</div>
<div class="a t" style="left:476.5px;width:1000px;text-align:center;top:548.06px;font-size:16px;line-height:22px;color:#212529;font-weight:400;letter-spacing:0.3px;">235,209,121</div>
<div class="a t" style="left:743.0px;width:1000px;text-align:center;top:548.06px;font-size:16px;line-height:22px;color:#212529;font-weight:400;letter-spacing:0.3px;">85/1/47</div>
<div class="a t" style="left:1125.5px;width:1000px;text-align:center;top:548.06px;font-size:16px;line-height:22px;color:#212529;font-weight:400;letter-spacing:0.3px;">PANTONE 12-0729 TCX</div>
<div class="a t" style="left:269.0px;width:1000px;text-align:center;top:583.06px;font-size:16px;line-height:22px;color:#212529;font-weight:400;letter-spacing:0.3px;">L2</div>
<div class="a t" style="left:476.5px;width:1000px;text-align:center;top:583.06px;font-size:16px;line-height:22px;color:#212529;font-weight:400;letter-spacing:0.3px;">167,51,51</div>
<div class="a t" style="left:743.0px;width:1000px;text-align:center;top:583.06px;font-size:16px;line-height:22px;color:#212529;font-weight:400;letter-spacing:0.3px;">40/48/29</div>
<div class="a t" style="left:1125.5px;width:1000px;text-align:center;top:583.06px;font-size:16px;line-height:22px;color:#212529;font-weight:400;letter-spacing:0.3px;">PANTONE 19-1662 TCX</div>
<div class="a" style="left:707px;top:627px;width:1180px;height:35px;background:#d1e7dd;"></div>
<div class="a" style="left:707px;top:662px;width:1180px;height:35px;background:#e6eaf1;"></div>
<div class="a" style="left:707px;top:627px;width:1181px;height:1px;background:#d5d6d8;"></div>
<div class="a" style="left:707px;top:662px;width:1181px;height:1px;background:#d5d6d8;"></div>
<div class="a" style="left:707px;top:697px;width:1181px;height:1px;background:#d5d6d8;"></div>
<div class="a" style="left:707px;top:732px;width:1181px;height:1px;background:#d5d6d8;"></div>
<div class="a" style="left:707px;top:627px;width:1px;height:106px;background:#d5d6d8;"></div>
<div class="a" style="left:989px;top:627px;width:1px;height:106px;background:#d5d6d8;"></div>
<div class="a" style="left:1887px;top:627px;width:1px;height:106px;background:#d5d6d8;"></div>
<div class="a t" style="left:348.0px;width:1000px;text-align:center;top:634.26px;font-size:16px;line-height:22px;color:#000;font-weight:700;letter-spacing:-0.1px;">BAR</div>
<div class="a t" style="left:938.0px;width:1000px;text-align:center;top:634.26px;font-size:16px;line-height:22px;color:#000;font-weight:700;letter-spacing:-0.1px;"></div>
<div class="a t" style="left:348.0px;width:1000px;text-align:center;top:670.06px;font-size:16px;line-height:22px;color:#212529;font-weight:400;letter-spacing:0.3px;">L1</div>
<div class="a t" style="left:938.0px;width:1000px;text-align:center;top:670.06px;font-size:16px;line-height:22px;color:#212529;font-weight:400;letter-spacing:0.3px;">1,0 / 1,2 / = 2 COS</div>
<div class="a t" style="left:348.0px;width:1000px;text-align:center;top:705.06px;font-size:16px;line-height:22px;color:#212529;font-weight:400;letter-spacing:0.3px;">L2</div>
<div class="a t" style="left:938.0px;width:1000px;text-align:center;top:705.06px;font-size:16px;line-height:22px;color:#212529;font-weight:400;letter-spacing:0.3px;">0,1 / 2,1 / = 2 COS</div>
<div class="a" style="left:707px;top:749px;width:1180px;height:35px;background:#f8f9fa;"></div>
<div class="a" style="left:707px;top:784px;width:528px;height:105px;background:#e6eaf1;"></div>
<div class="a" style="left:1235px;top:784px;width:652px;height:166px;background:#e6eaf1;"></div>
<div class="a" style="left:707px;top:749px;width:1181px;height:1px;background:#d5d6d8;"></div>
<div class="a" style="left:707px;top:784px;width:1181px;height:1px;background:#d5d6d8;"></div>
<div class="a" style="left:707px;top:950px;width:1181px;height:1px;background:#d5d6d8;"></div>
<div class="a" style="left:707px;top:889px;width:528px;height:1px;background:#d5d6d8;"></div>
<div class="a" style="left:707px;top:749px;width:1px;height:202px;background:#d5d6d8;"></div>
<div class="a" style="left:1235px;top:749px;width:1px;height:202px;background:#d5d6d8;"></div>
<div class="a" style="left:1561px;top:749px;width:1px;height:202px;background:#d5d6d8;"></div>
<div class="a" style="left:1887px;top:749px;width:1px;height:202px;background:#d5d6d8;"></div>
<div class="a" style="left:821px;top:784px;width:1px;height:166px;background:#d5d6d8;"></div>
<div class="a t" style="left:471px;width:1000px;text-align:center;top:755.66px;font-size:16px;line-height:22px;color:#000;font-weight:700;letter-spacing:-0.1px;">Production</div>
<div class="a t" style="left:898px;width:1000px;text-align:center;top:755.66px;font-size:16px;line-height:22px;color:#000;font-weight:700;letter-spacing:-0.1px;">[Design]</div>
<div class="a t" style="left:1224px;width:1000px;text-align:center;top:755.66px;font-size:16px;line-height:22px;color:#000;font-weight:700;letter-spacing:-0.1px;">Zoom : 4.0</div>
<div class="a t" style="left:264px;width:1000px;text-align:center;top:826.06px;font-size:16px;line-height:22px;color:#212529;font-weight:400;letter-spacing:0.2px;">[arrangement]</div>
<div class="a t" style="left:528px;width:1000px;text-align:center;top:814.06px;font-size:16px;line-height:22px;color:#212529;font-weight:400;letter-spacing:0.2px;">L1FULL START=0</div>
<div class="a t" style="left:528px;width:1000px;text-align:center;top:838.06px;font-size:16px;line-height:22px;color:#212529;font-weight:400;letter-spacing:0.2px;">L2FULL START=0</div>
<div class="a t" style="left:264px;width:1000px;text-align:center;top:909.36px;font-size:16px;line-height:22px;color:#212529;font-weight:400;letter-spacing:0.2px;">[remark]</div>
<div class="a t" style="left:528px;width:1000px;text-align:center;top:909.36px;font-size:16px;line-height:22px;color:#212529;font-weight:400;letter-spacing:0.2px;">True</div>
<div class="a" style="left:1241px;top:790px;width:315px;height:155px;background:#fff;"></div>
<div class="a" style="left:1241px;top:790px;width:315px;height:40px;background:#000;"></div>
<svg class="a" style="left:1241px;top:790px" width="315" height="40" viewBox="0 0 315 40"><defs><pattern id="dp" x="0" y="0" width="20" height="40" patternUnits="userSpaceOnUse"><circle cx="9.4" cy="8.7" r="4.2" stroke="#f2c094" stroke-width="1" fill="none"/><circle cx="9.4" cy="8.7" r="1" fill="#3aa3a8"/>
<circle cx="9.4" cy="28.4" r="4.2" stroke="#f3e4a8" stroke-width="1" fill="none"/><circle cx="9.4" cy="28.4" r="1" fill="#3aa3a8"/>
<path d="M12.6 11.5L22.5 26.5L25.2 28.4" stroke="#efe6b2" stroke-width="0.9" fill="none"/>
<path d="M7.5 13.4L22 26" stroke="#b86a78" stroke-width="0.7" fill="none"/>
<path d="M-7.4 11.5L2.5 26.5L5.2 28.4" stroke="#efe6b2" stroke-width="0.9" fill="none"/></pattern></defs><rect width="315" height="40" fill="#000"/><rect width="315" height="40" fill="url(#dp)"/></svg>
<svg class="a" style="left:1567px;top:790px" width="315" height="155" viewBox="0 0 315 155"><defs><pattern id="zp" x="0" y="0" width="14" height="12" patternUnits="userSpaceOnUse"><rect x="-1" y="-1" width="16" height="14" fill="#c24c3e"/>
<path d="M0 0L14 12M-7.0 6.0L7.0 18.0M7.0 -6.0L21.0 6.0" stroke="#de7a6a" stroke-width="2.4"/>
<path d="M-2 9.0L7.0 -3M5.0 15L17 3.0" stroke="#d46656" stroke-width="1.6"/>
<path d="M1.8 -1.5L15.8 10.5M-5.2 4.5L8.8 16.5M8.8 -7.5L22.8 4.5" stroke="#5e1510" stroke-width="0.6"/>
<ellipse cx="4.44" cy="5.93" rx="3.2" ry="2.2" fill="#8a8a88" stroke="#3a1410" stroke-width="0.6" transform="rotate(28 4.44 5.93)"/><ellipse cx="12.96" cy="0" rx="3.2" ry="2.2" fill="#8a8a88" stroke="#3a1410" stroke-width="0.6" transform="rotate(28 12.96 0)"/><ellipse cx="12.96" cy="12" rx="3.2" ry="2.2" fill="#8a8a88" stroke="#3a1410" stroke-width="0.6" transform="rotate(28 12.96 12)"/><ellipse cx="-1.11" cy="0" rx="3.2" ry="2.2" fill="#8a8a88" stroke="#3a1410" stroke-width="0.6" transform="rotate(28 -1.11 0)"/><ellipse cx="-1.11" cy="12" rx="3.2" ry="2.2" fill="#8a8a88" stroke="#3a1410" stroke-width="0.6" transform="rotate(28 -1.11 12)"/><ellipse cx="18.5" cy="5.93" rx="3.2" ry="2.2" fill="#8a8a88" stroke="#3a1410" stroke-width="0.6" transform="rotate(28 18.5 5.93)"/><ellipse cx="-9.56" cy="5.93" rx="3.2" ry="2.2" fill="#8a8a88" stroke="#3a1410" stroke-width="0.6" transform="rotate(28 -9.56 5.93)"/>
<path d="M11 3.6L13.4 6M13.4 3.6L11 6M4.3 9.5L6.7 11.9M6.7 9.5L4.3 11.9" stroke="#85160e" stroke-width="1.1"/></pattern></defs><rect width="315" height="155" fill="url(#zp)"/></svg>
<div class="a" style="left:707px;top:983px;width:1180px;height:1px;background:#d5d9df;"></div>
<div class="a" style="left:0px;top:1040px;width:1920px;height:40px;background:#1c1c1c;"></div>
<svg class="a" style="left:15px;top:1051.5px" width="18" height="18" viewBox="0 0 18 18"><path d="M0.7 2.4L7.3 1.5V8H0.7ZM8.3 1.35L16.5 0.2V8H8.3ZM0.7 9H7.3V15.5L0.7 14.6ZM8.3 9H16.5V16.8L8.3 15.65Z" fill="#fff"/></svg>
<div class="a" style="left:48px;top:1040px;width:344px;height:40px;background:#f0f0f0;border:1px solid #c8c8c8;border-bottom:none"></div>
<svg class="a" style="left:59px;top:1050px" width="20" height="20" viewBox="0 0 20 20"><circle cx="11.5" cy="7.5" r="5.5" stroke="#1a1a1a" stroke-width="1.3" fill="none"/><path d="M7.5 11.5L1.5 17.5" stroke="#1a1a1a" stroke-width="1.5"/></svg>
<div class="a t" style="left:88.3px;top:1049.30px;font-size:15px;line-height:21px;color:#1a1a1a;font-weight:400;">찾기</div>
<svg class="a" style="left:406px;top:1050px" width="20" height="20" viewBox="0 0 20 20"><path d="M3 2.5H13M3 17.5H13M3 5.5H13V14.5H3Z" stroke="#fff" stroke-width="1.2" fill="none"/><path d="M17 2V6M17 8V12M17 14V18" stroke="#fff" stroke-width="1.2"/><rect x="15.5" y="6.5" width="3" height="2" fill="#fff"/></svg>
<div class="a" style="left:455px;top:1048px;width:24px;height:24px;background:#fae100;"></div>
<svg class="a" style="left:455px;top:1048px" width="24" height="24" viewBox="0 0 24 24"><ellipse cx="12" cy="11" rx="9.5" ry="7" fill="#3c1e1e"/><path d="M6 16L5 21L10 17Z" fill="#3c1e1e"/></svg>
<div class="a t" style="left:-33px;width:1000px;text-align:center;top:1057.09px;font-size:5.5px;line-height:8px;color:#fae100;font-weight:700;">TALK</div>
<svg class="a" style="left:502px;top:1046px" width="28" height="28" viewBox="0 0 28 28"><circle cx="14" cy="14" r="12.4" fill="#db4437"/><path d="M14 14L3.2615999999999996 7.8A12.4 12.4 0 0 0 14 26.4Z" fill="#0f9d58"/><path d="M14 14L14 26.4A12.4 12.4 0 0 0 24.7384 7.8Z" fill="#ffcd40"/><circle cx="14" cy="14" r="5.704000000000001" fill="#fff"/><circle cx="14" cy="14" r="4.4639999999999995" fill="#4285f4"/></svg>
<svg class="a" style="left:553px;top:1048px" width="22" height="22" viewBox="0 0 22 22"><path d="M11 1.5L20 6.5V16.5L11 21.5L2 16.5V6.5Z" fill="#fff"/><path d="M11 11L11 21.5M11 11L2.5 6.5M11 11L19.5 6.5" stroke="#1c1c1c" stroke-width="2.2"/><path d="M11 4.5L17 8V15L11 18.5L5 15V8Z" fill="none" stroke="#1c1c1c" stroke-width="0"/></svg>
<svg class="a" style="left:603px;top:1049px" width="22" height="22" viewBox="0 0 22 22"><path d="M2 3L16 1.5L20.5 5V19.5L6 21L1.5 17Z" fill="#fff" stroke="#bbb" stroke-width="1"/><path d="M5.5 6.5H17.5V19H5.5Z" fill="#fff" stroke="#000" stroke-width="1.2"/><path d="M7.5 17V8L14.5 17V8" stroke="#000" stroke-width="2.2" fill="none"/></svg>
<svg class="a" style="left:651px;top:1047px" width="24" height="25" viewBox="0 0 24 25"><path d="M1 1H8L6 3L9 6L6 9L3 6L1 8Z" fill="#1e88e5"/><rect x="4" y="10" width="14" height="11" rx="2" fill="#8d8d8d"/><path d="M7 10V6A4 4 0 0 1 15 6V10" stroke="#a9a9a9" stroke-width="2.2" fill="none"/><path d="M23 24H16L18 22L15 19L18 16L21 19L23 17Z" fill="#2ebd36"/></svg>
<svg class="a" style="left:700px;top:1048px" width="24" height="24" viewBox="0 0 24 24"><path d="M3 4L12 0L22 3L24 14L17 24L2 20Z" fill="#21d789"/><path d="M12 0L22 2L24 14L17 24L8 22Z" fill="#fcf84a"/><path d="M18 8L23 10L20 16Z" fill="#07c3f2"/><rect x="5" y="5" width="14" height="14" fill="#000"/><text x="6" y="12.5" font-size="7.5" font-weight="700" fill="#fff" font-family="Liberation Sans">PC</text><rect x="6.2" y="15.5" width="5" height="1.2" fill="#fff"/></svg>
<svg class="a" style="left:749px;top:1050px" width="23" height="19" viewBox="0 0 23 19"><rect x="0.5" y="0.5" width="22" height="18" fill="#000" stroke="#9a9a9a" stroke-width="1"/><rect x="1" y="1" width="21" height="2" fill="#cfcfcf"/><path d="M3 7H7M9 7L10 8M12 9H19" stroke="#d0d0d0" stroke-width="1"/></svg>
<svg class="a" style="left:798px;top:1049px" width="24" height="23" viewBox="0 0 24 23"><path d="M1 6L5 4V17L1 19Z" fill="#bcbcbc"/><rect x="5" y="1.5" width="18" height="15" fill="#d9dde0"/><rect x="6.5" y="3" width="15" height="12" fill="#cfe7f6"/><path d="M7 11L10 11L12 6L14 12L16 9L18 11L21 11" stroke="#3a8fd0" stroke-width="1" fill="none"/><ellipse cx="14" cy="20" rx="5" ry="2" fill="#cfcfcf"/></svg>
<svg class="a" style="left:847px;top:1048px" width="24" height="24" viewBox="0 0 24 24"><rect x="0" y="0" width="24" height="24" rx="3" fill="#2c3e78"/><path d="M24 2V24H2Z" fill="#f3f3f6"/><text x="2" y="19" font-size="15" font-weight="700" fill="#1d2150" font-family="Liberation Serif">Tr</text></svg>
<svg class="a" style="left:895px;top:1048px" width="25" height="25" viewBox="0 0 25 25"><ellipse cx="10" cy="14" rx="9.5" ry="7.5" fill="#b9daf0"/><circle cx="5" cy="13" r="1.5" fill="#e53935"/><circle cx="7.5" cy="9" r="1.5" fill="#7cc545"/><circle cx="11.5" cy="8.5" r="1.5" fill="#f4b400"/><circle cx="10" cy="14" r="1.3" fill="#1c1c1c"/><path d="M23 2L11 23" stroke="#f29b38" stroke-width="1.8"/></svg>
<svg class="a" style="left:946px;top:1049px" width="22" height="22" viewBox="0 0 22 22"><circle cx="11" cy="11" r="6.2" stroke="#fff" stroke-width="3.2" fill="none"/><rect x="9" y="0.8" width="4" height="5" fill="#fff" transform="rotate(0 11 11)"/><rect x="9" y="0.8" width="4" height="5" fill="#fff" transform="rotate(45 11 11)"/><rect x="9" y="0.8" width="4" height="5" fill="#fff" transform="rotate(90 11 11)"/><rect x="9" y="0.8" width="4" height="5" fill="#fff" transform="rotate(135 11 11)"/><rect x="9" y="0.8" width="4" height="5" fill="#fff" transform="rotate(180 11 11)"/><rect x="9" y="0.8" width="4" height="5" fill="#fff" transform="rotate(225 11 11)"/><rect x="9" y="0.8" width="4" height="5" fill="#fff" transform="rotate(270 11 11)"/><rect x="9" y="0.8" width="4" height="5" fill="#fff" transform="rotate(315 11 11)"/></svg>
<div class="a" style="left:982px;top:1040px;width:48px;height:40px;background:#404040;"></div>
<svg class="a" style="left:992px;top:1046px" width="28" height="28" viewBox="0 0 28 28"><circle cx="14" cy="14" r="12.4" fill="#db4437"/><path d="M14 14L3.2615999999999996 7.8A12.4 12.4 0 0 0 14 26.4Z" fill="#0f9d58"/><path d="M14 14L14 26.4A12.4 12.4 0 0 0 24.7384 7.8Z" fill="#ffcd40"/><circle cx="14" cy="14" r="5.704000000000001" fill="#fff"/><circle cx="14" cy="14" r="4.4639999999999995" fill="#4285f4"/><circle cx="20" cy="20" r="7.8" fill="#5b62c8"/></svg>
<div class="a t" style="left:512px;width:1000px;text-align:center;top:1062.25px;font-size:6.5px;line-height:9px;color:#dfe3ff;font-weight:400;">영우</div>
<svg class="a" style="left:1043px;top:1048px" width="24" height="24" viewBox="0 0 24 24"><circle cx="12" cy="12" r="11.2" fill="#1976d2"/><path d="M13.5 4L7 13H11.5L9.5 20L17 10.5H12.5Z" fill="#fff"/></svg>
<svg class="a" style="left:1092px;top:1050px" width="24" height="20" viewBox="0 0 24 20"><path d="M1 1H8L10 3H23V19H1Z" fill="#f5c542"/><rect x="1" y="5" width="22" height="14" fill="#ffd766"/><path d="M6 19V12H18V19H15V15H9V19Z" fill="#2f8ae0"/></svg>
<div class="a" style="left:888px;top:1078px;width:40px;height:2px;background:#76b9ed;"></div>
<div class="a" style="left:937px;top:1078px;width:40px;height:2px;background:#76b9ed;"></div>
<div class="a" style="left:982px;top:1078px;width:48px;height:2px;background:#76b9ed;"></div>
<div class="a" style="left:1035px;top:1078px;width:40px;height:2px;background:#76b9ed;"></div>
<div class="a" style="left:1084px;top:1078px;width:40px;height:2px;background:#76b9ed;"></div>
<svg class="a" style="left:1710px;top:1055px" width="14" height="9" viewBox="0 0 14 9"><path d="M1 8L7 2L13 8" stroke="#fff" stroke-width="1.2" fill="none"/></svg>
<svg class="a" style="left:1733px;top:1053px" width="14" height="14" viewBox="0 0 14 14"><circle cx="7" cy="7" r="7" fill="#8c8c8c"/><path d="M4.3 4.3L9.7 9.7M9.7 4.3L4.3 9.7" stroke="#2a2a2a" stroke-width="1.6"/></svg>
<div class="a" style="left:1762px;top:1053px;width:15px;height:14px;background:#fff;"></div>
<div class="a t" style="left:1269.5px;width:1000px;text-align:center;top:1053.69px;font-size:11px;line-height:15px;color:#000;font-weight:400;">한</div>
<div class="a t" style="left:1326px;width:1000px;text-align:center;top:1042.64px;font-size:12px;line-height:17px;color:#fff;font-weight:400;">오전 10:37</div>
<div class="a t" style="left:1327px;width:1000px;text-align:center;top:1060.34px;font-size:12px;line-height:17px;color:#fff;font-weight:400;">2023-11-09</div>
<svg class="a" style="left:1878px;top:1050px" width="18" height="16" viewBox="0 0 18 16"><path d="M1 1H17V12H6L3 15V12H1Z" fill="#fff"/><path d="M4 4.5H14M4 7H14M4 9.5H11" stroke="#1c1c1c" stroke-width="1"/></svg>
<svg class="a" style="left:1884px;top:1057px" width="22" height="22" viewBox="0 0 22 22"><circle cx="11" cy="11" r="9.8" fill="#333" stroke="#777" stroke-width="1"/></svg>
<div class="a t" style="left:1395px;width:1000px;text-align:center;top:1060.69px;font-size:11px;line-height:15px;color:#fff;font-weight:700;">17</div>
<div class="a" style="left:1915px;top:1040px;width:1px;height:40px;background:#5a5a5a;"></div>
</body></html>
